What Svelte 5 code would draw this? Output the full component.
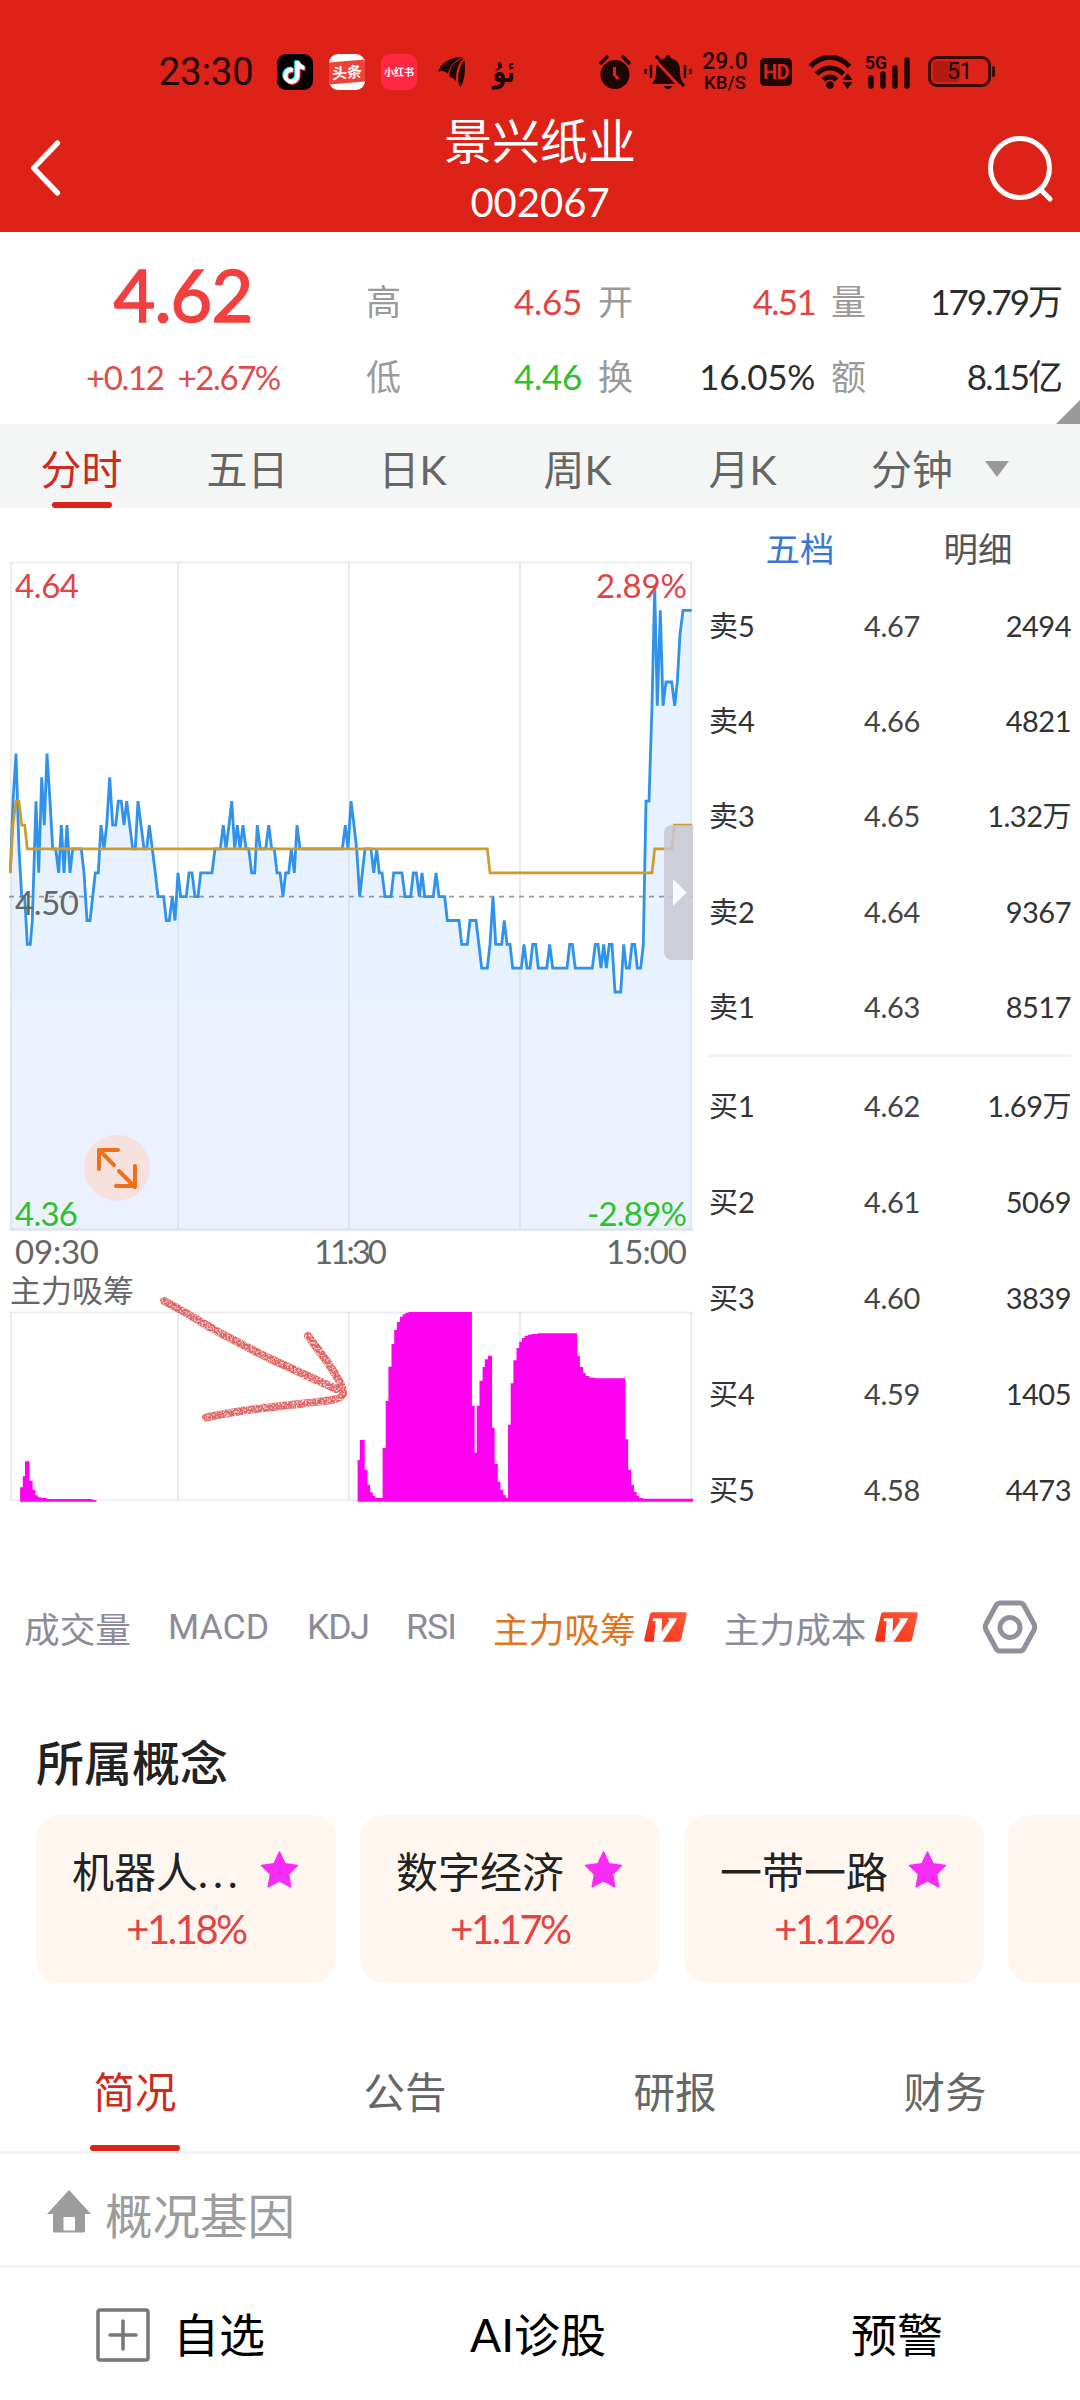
<script>
  const quotes = [
    { label: '高', value: '4.65', tone: 'up' },
    { label: '开', value: '4.51', tone: 'up' },
    { label: '量', value: '179.79万', tone: 'flat' },
    { label: '低', value: '4.46', tone: 'down' },
    { label: '换', value: '16.05%', tone: 'flat' },
    { label: '额', value: '8.15亿', tone: 'flat' }
  ];
  const periods = ['分时', '五日', '日K', '周K', '月K', '分钟'];
  const asks = [
    ['卖5', '4.67', '2494'],
    ['卖4', '4.66', '4821'],
    ['卖3', '4.65', '1.32万'],
    ['卖2', '4.64', '9367'],
    ['卖1', '4.63', '8517']
  ];
  const bids = [
    ['买1', '4.62', '1.69万'],
    ['买2', '4.61', '5069'],
    ['买3', '4.60', '3839'],
    ['买4', '4.59', '1405'],
    ['买5', '4.58', '4473']
  ];
  const indicators = [
    { name: '成交量' },
    { name: 'MACD' },
    { name: 'KDJ' },
    { name: 'RSI' },
    { name: '主力吸筹', vip: true, active: true },
    { name: '主力成本', vip: true }
  ];
  const concepts = [
    { name: '机器人', more: '...', change: '+1.18%' },
    { name: '数字经济', change: '+1.17%' },
    { name: '一带一路', change: '+1.12%' }
  ];
  const sections = ['简况', '公告', '研报', '财务'];

  // Price series: [thirds of a pixel from the origin, cents above the previous close]
  const morning = [
    [31,1],[39,4],[48,6],[57,2],[65,0],[74,0],[82,-2],[91,-2],[97,-1],[108,4],[116,1],[125,5],[133,3],[141,6],[150,4],[158,2],
    [167,2],[176,1],[184,3],[192,1],[201,3],[210,1],[218,2],[244,2],[252,1],[261,-1],[270,-1],[278,0],[286,1],[295,1],[303,3],
    [312,2],[320,3],[329,5],[338,3],[347,3],[355,4],[364,4],[372,3],[380,4],[389,3],[398,2],[406,2],[414,4],[423,3],[432,2],
    [440,2],[448,3],[457,2],[466,1],[474,0],[491,0],[499,-1],[508,-1],[517,0],[525,-1],[534,1],[542,0],[559,0],[567,1],[576,1],
    [585,0],[594,0],[602,1],[636,1],[645,2],[661,2],[670,3],[678,2],[687,3],[695,4],[704,2],[712,3],[720,2],[729,3],[738,2],
    [746,2],[755,1],[764,1],[772,3],[781,2],[797,2],[806,3],[815,2],[823,2],[831,1],[840,1],[849,0],[857,1],[866,1],[874,2],
    [883,1],[891,3],[900,2],[1027,2],[1036,3],[1044,2]
  ];
  const afternoon = [
    [33,4],[42,3],[50,2],[59,0],[67,1],[75,2],[93,2],[101,1],[110,2],[118,1],[126,1],[135,0],[153,0],[161,1],[186,1],[195,0],
    [212,0],[220,1],[229,1],[238,0],[246,1],[254,0],[280,0],[288,1],[297,0],[314,0],[322,-1],[357,-1],[365,-2],[382,-2],[390,-1],
    [408,-1],[425,-3],[442,-3],[450,-2],[459,0],[467,-2],[485,-2],[493,-1],[501,-2],[510,-2],[518,-3],[544,-3],[552,-2],[561,-3],
    [570,-3],[578,-2],[587,-2],[595,-3],[620,-3],[629,-2],[638,-3],[681,-3],[689,-2],[697,-2],[706,-3],[757,-3],[766,-2],[774,-2],
    [783,-3],[791,-2],[799,-3],[808,-2],[816,-2],[825,-4],[842,-4],[851,-2],[859,-3],[868,-3],[876,-2],[884,-2],[892,-3],[902,-3],
    [910,-2],[918,4],[927,4],[936,8],[944,13],[952,8],[961,12],[969,8],[978,9],[995,9],[1004,8],[1012,9],[1020,11],[1029,12],[1055,12]
  ];
  const average = [[31,1],[39,3],[48,4],[57,4],[65,3],[74,3],[82,2],[1462,2],[1470,1],[1956,1],[1964,2],[2016,2],[2023,3],[2076,3]];
  const py = (level) => (388.6 - level * 23.85).toFixed(1);
  const toPoints = (list) => list.map(([x, l]) => `${(x / 3).toFixed(1)},${py(l)}`).join(' ');
  const series = [...morning, ...afternoon.map(([x, l]) => [x + 1020, l])];
  const priceLine = toPoints(series);
  const avgLine = toPoints(average);

  // Accumulation histogram as a step outline
  const early = [[45,1072],[51,1039],[56,994],[66,1052],[73,1080],[79,1096],[85,1102],[92,1104],[105,1107],[207,1110],[216,1115]];
  const late = [
    [801,990],[806,930],[817,1020],[823,1064],[829,1087],[835,1098],[841,1104],[857,954],[864,813],[870,710],[877,642],[883,600],
    [889,576],[896,560],[902,553],[908,548],[915,546],[1057,827],[1063,968],[1068,827],[1074,752],[1081,711],[1086,688],[1093,677],
    [1102,893],[1108,1002],[1115,1055],[1121,1080],[1127,1095],[1133,1103],[1138,884],[1144,760],[1150,691],[1157,654],[1163,635],
    [1169,624],[1175,618],[1182,614],[1190,612],[1205,610],[1293,678],[1299,711],[1306,729],[1312,738],[1320,743],[1335,745],
    [1401,928],[1407,1019],[1414,1064],[1420,1086],[1426,1098],[1432,1104],[1440,1106],[1552,1115]
  ];
  const steps = (list) =>
    `M${(list[0][0] / 2.24).toFixed(1)} 993.7` +
    list.map(([x, y]) => `H${(x / 2.24).toFixed(1)}V${(622 + y / 3).toFixed(1)}`).join('') + 'Z';
</script>

<div class="screen">
  <header class="top">
    <div class="status">
      <span class="clock">23:30</span>
      <svg class="app" viewBox="0 0 36 36"><rect width="36" height="36" rx="9"/><g fill="none" stroke-width="4.2"><path d="M16 16a6 6 0 1 0 4.5 5.8V7.5c1 4 3.500 6 7 6.300" stroke="#25f4ee" transform="translate(-1.200 -1)"/><path d="M16 16a6 6 0 1 0 4.500 5.800V7.500c1 4 3.500 6 7 6.300" stroke="#fe2c55" transform="translate(1 1)"/><path d="M16 16a6 6 0 1 0 4.500 5.800V7.500c1 4 3.500 6 7 6.300" stroke="#fff"/></g></svg>
      <span class="chip news"><b>头条</b></span>
      <span class="chip book">小红书</span>
      <svg class="leaf" viewBox="0 0 27 30"><path d="M0 15C3 6 12 0 25 0C16 4 11 10 10 17C7 14 3 13 0 15ZM11.500 20C10.500 11 16.500 4 26 1C19 8 18 15 18 24C16 22 14 20 11.500 20ZM20.500 26C19.500 16 22 8 26.500 3C27.500 13 27 23 22.500 30C22 28 21 27 20.500 26Z"/></svg>
      <span class="uyghur">ئۇ</span>
      <svg class="alarm" viewBox="0 0 34 36"><circle cx="17" cy="20.500" r="14.500"/><path d="M3 9L9 3M31 9L25 3" stroke="#1f0503" stroke-width="3.500" stroke-linecap="round"/><path d="M16.500 13v8l4 4" fill="none" stroke="#dd2318" stroke-width="3"/></svg>
      <svg class="bell" viewBox="0 0 48 36"><path d="M24 1c-2 0-2.500 1-2.500 3C14 6 12 11 12 16c0 7-1 10-4 14h32c-3-4-4-7-4-14 0-5-2-10-9.500-12C26.500 2 26 1 24 1ZM20 32h8c-1 4-7 4-8 0Z"/><path d="M9 4L37 34" stroke="#dd2318" stroke-width="3"/><path d="M12 2L40 32" stroke="#1f0503" stroke-width="3"/><path d="M7 11v13M1.500 15v5M41 11v13M46.500 15v5" stroke="#1f0503" stroke-width="2.500"/></svg>
      <span class="speed"><b>29.0</b><b class="unit">KB/S</b></span>
      <span class="hd">HD</span>
      <svg class="wifi" viewBox="0 0 44 34"><g fill="none" stroke="#1f0503" stroke-width="5"><path d="M2 11.500C13-1 30-1 41 11.500"/><path d="M8 19c8-8 19-8 27 0"/><path d="M15 25c4-4 9-4 13 0"/></g><circle cx="21.500" cy="30" r="3.800"/><path d="M34 25l5-7 5 7ZM34 27l5 7 5-7Z"/></svg>
      <svg class="signal" viewBox="0 0 50 36"><text x="0" y="15" textLength="22" lengthAdjust="spacingAndGlyphs">5G</text><g stroke="#1f0503" stroke-width="5.500" stroke-linecap="round"><path d="M6 24v8M18 20v12M30 14v18M42 6v26"/></g></svg>
      <span class="battery"><i></i><em>51</em></span>
    </div>
    <div class="titlebar">
      <svg class="back" viewBox="0 0 32 56"><path d="M28 4L5 28l23 24" /></svg>
      <div class="title"><h1>景兴纸业</h1><span>002067</span></div>
      <svg class="search" viewBox="0 0 68 68"><circle cx="32" cy="33" r="29.500"/><path d="M52 54L62 64"/></svg>
    </div>
  </header>

  <section class="quote">
    <div class="last">
      <strong>4.62</strong>
      <span>+0.12&nbsp; +2.67%</span>
    </div>
    <dl>
      {#each quotes as q}
        <div><dt>{q.label}</dt><dd class={q.tone}>{q.value}</dd></div>
      {/each}
    </dl>
    <i class="corner"></i>
  </section>

  <nav class="periods">
    {#each periods as p, i}
      <span class:active={i === 0}>{p}</span>
    {/each}
    <i></i>
  </nav>

  <main>
    <svg class="chart" viewBox="0 0 700 1012" width="700" height="1012">
      <defs>
        <linearGradient id="area" x1="0" y1="54" x2="0" y2="722" gradientUnits="userSpaceOnUse">
          <stop offset="0.656" stop-color="#e7f2fe"/><stop offset="0.656" stop-color="#ebf2fe"/>
        </linearGradient>
        <filter id="chalk" x="-10%" y="-10%" width="120%" height="120%">
          <feTurbulence type="fractalNoise" baseFrequency="0.55" numOctaves="2" seed="4" result="n"/>
          <feColorMatrix in="n" type="matrix" values="0 0 0 0 0  0 0 0 0 0  0 0 0 0 0  2.600 0 0 0 -0.450" result="a"/>
          <feComposite in="SourceGraphic" in2="a" operator="in"/>
        </filter>
      </defs>
      <polygon points={`10.300,721 ${priceLine} 691.500,721`} fill="url(#area)"/>
      <g class="grid">
        <path d="M11 54.500V721M178 54.500V721M349 54.500V721M520 54.500V721M691 54.500V721"/>
        <path d="M9 54.500H693" stroke-width="1.300"/><path d="M9 721.500H693" class="base"/>
      </g>
      <path d="M9 388.600H693" class="dash"/>
      <polyline points={priceLine} class="price"/>
      <polyline points={avgLine} class="avg"/>
      <g class="labels">
        <text x="15" y="89.500" class="up" textLength="64">4.64</text>
        <text x="596" y="89.500" class="up" textLength="91">2.89%</text>
        <text x="15" y="407" textLength="64">4.50</text>
        <text x="15" y="717.500" class="down" textLength="63">4.36</text>
        <text x="587" y="717.500" class="down" textLength="100">-2.89%</text>
        <text x="15" y="756" textLength="84">09:30</text>
        <text x="314" y="756" textLength="73">11:30</text>
        <text x="606" y="756" textLength="81">15:00</text>
        <text x="10" y="793.500" class="cn" textLength="124">主力吸筹</text>
      </g>
      <path class="handle" d="M693 317H672a8 8 0 0 0-8 8V444a8 8 0 0 0 8 8H693Z"/>
      <path d="M673 371L686.500 384.500L673 398Z" fill="#f9fbff"/>
      <circle cx="117" cy="659.700" r="33" fill="#f7e1de"/>
      <path class="expand" d="M99 661V642H118M99 642L114 657M119 663L135 679M135 658V678H116"/>
      <g class="grid">
        <path d="M11 804.500V992M178 804.500V992M349 804.500V992M520 804.500V992M691 804.500V992"/>
        <path d="M9 804.500H693M9 992H693" stroke-width="1.300"/>
      </g>
      <path d={steps(early) + steps(late)} fill="#ff00f0"/>
      <g class="mark" filter="url(#chalk)">
        <path d="M164 793L179 801C196 810 214 823 232 831C250 841 268 850 286 858C303 866 319 873 336 881"/>
        <path d="M308 828L328 855C338 870 343 878 343 886C342 893 320 893 300 896C270 899 235 903 206 909.500"/>
      </g>
    </svg>

    <aside>
      <div class="booktabs"><span class="on">五档</span><span>明细</span></div>
      <div class="rows asks">
        {#each asks as [n, p, v]}
          <div class="row"><span>{n}</span><span class="p">{p}</span><span class="v">{v}</span></div>
        {/each}
      </div>
      <div class="rows bids">
        {#each bids as [n, p, v]}
          <div class="row"><span>{n}</span><span class="p">{p}</span><span class="v">{v}</span></div>
        {/each}
      </div>
    </aside>
  </main>

  <nav class="indicators">
    {#each indicators as ind}
      <span class:active={ind.active}>{ind.name}{#if ind.vip}<svg viewBox="0 0 44 30"><defs><linearGradient id="vip" x1="0" y1="1" x2="1" y2="0"><stop offset="0" stop-color="#f52d12"/><stop offset="1" stop-color="#ff5a3c"/></linearGradient></defs><path d="M8.500 0H42q2 0 1.700 2L38 27.500q-.6 2.500-3 2.500H2q-2.300 0-1.700-2.500L6 2.500Q6.500 0 8.500 0Z" fill="url(#vip)"/><path d="M9 6H18.500L18 20L26 8L24 6H34L32 10L19 30H10L12 9H9Z" fill="#fff"/></svg>{/if}</span>
    {/each}
    <svg class="hex" viewBox="0 0 56 54"><path d="M18 3H38q2.500 0 4 2.500L52 24q1.500 3 0 6L42 48.500q-1.500 2.500-4 2.500H18q-2.500 0-4-2.500L4 30q-1.500-3 0-6L14 5.500q1.500-2.500 4-2.500Z"/><circle cx="28" cy="27.500" r="10"/></svg>
  </nav>

  <h2>所属概念</h2>
  <section class="cards">
    {#each concepts as c}
      <article>
        <div class="name"><span>{c.name}{#if c.more}<i>{c.more}</i>{/if}</span><svg viewBox="0 0 38 36"><path d="M19 1l5.300 11.300L36.500 14l-8.800 8.600L30 35l-11-6-11 6 2.300-12.400L1.500 14l12.200-1.700Z" stroke="#f92cf5" stroke-width="1.500" stroke-linejoin="round"/></svg></div>
        <div class="change">{c.change}</div>
      </article>
    {/each}
    <article></article>
  </section>

  <nav class="sections">
    {#each sections as s, i}
      <span class:active={i === 0}>{s}</span>
    {/each}
  </nav>

  <section class="overview">
    <svg viewBox="0 0 44 43"><path d="M22 0L44 24H38V41q0 1.500-1.500 1.500H7.500Q6 42.500 6 41V24H0ZM16.500 27V40.500H28V27Z" fill-rule="evenodd"/></svg>
    <span>概况基因</span>
  </section>

  <footer>
    <span class="add"><svg viewBox="0 0 54 54"><rect x="2" y="2" width="50" height="50" rx="2"/><path d="M14 27H40M27 13V41"/></svg>自选</span>
    <span class="ai">AI诊股</span>
    <span class="alert">预警</span>
  </footer>
</div>

<style>
  :global(body) { background: #fefefe; }
  .screen { width: 1080px; height: 2400px; overflow: hidden; background: #fefefe; color: #333; font-family: Lato, 'Noto Sans CJK SC', sans-serif; line-height: 1; display: flex; flex-direction: column; }
  .screen > * { flex-shrink: 0; box-sizing: border-box; white-space: nowrap; }
  svg { display: block; flex-shrink: 0; }
  i, em { font-style: normal; }

  .top { height: 232px; background: #dd2318; color: #fff; padding-top: 44px; }
  .status { height: 55px; padding-left: 159px; display: flex; align-items: center; color: #1f0503; fill: #1f0503; }
  .status > * { flex-shrink: 0; }
  .clock { font: 38px Roboto, sans-serif; width: 118px; }
  .app { width: 36px; height: 36px; fill: #000; margin-right: 16px; }
  .chip { width: 36px; height: 36px; border-radius: 9px; display: flex; align-items: center; justify-content: center; font-size: 15px; margin-right: 16px; overflow: hidden; }
  .news { background: #fff; }
  .news b { background: #ee4238; color: #fff; width: 36px; text-align: center; line-height: 22px; transform: skewY(-5deg); }
  .book { background: #ff2741; color: #fff; font-size: 10px; font-weight: bold; }
  .leaf { width: 27px; height: 30px; margin-left: 5px; }
  .uyghur { font: bold 28px/36px 'DejaVu Sans', sans-serif; width: 32px; margin-left: 23px; margin-right: 78px; text-align: center; transform: scale(.8, 1.1); }
  .alarm { width: 34px; height: 36px; }
  .bell { width: 48px; height: 36px; margin-left: 12px; }
  .speed { width: 48px; margin-left: 9px; display: flex; flex-direction: column; align-items: center; gap: 1px; font: 23px/22px Roboto, sans-serif; }
  .speed b { font-weight: 500; }
  .speed .unit { font-size: 18.500px; line-height: 19px; font-weight: 500; }
  .hd { margin-left: 11px; width: 32px; height: 28px; border-radius: 5px; background: #1f0503; color: #dd2318; font: bold 20px/29px Roboto, sans-serif; text-align: center; letter-spacing: -.5px; }
  .wifi { width: 45px; height: 34px; margin-left: 16px; }
  .signal { width: 50px; height: 36px; margin-left: 12px; overflow: visible; }
  .signal text { font: bold 18px Roboto, sans-serif; }
  .battery { position: relative; width: 63px; height: 31px; box-sizing: border-box; border: 3px solid #3a0a06; border-radius: 9px; margin-left: 13px; display: flex; align-items: center; justify-content: center; }
  .battery::after { content: ''; position: absolute; right: -7px; top: 7px; width: 3px; height: 11px; border-radius: 2px; background: #3a0a06; }
  .battery i { position: absolute; left: 2px; top: 2px; width: 27px; height: 21px; background: #b31b12; border-radius: 4px; }
  .battery em { position: relative; font: 23px/25px Roboto, sans-serif; letter-spacing: -.5px; }

  .titlebar { display: flex; justify-content: space-between; align-items: flex-start; padding: 12px 24px 0 27px; height: 133px; box-sizing: border-box; }
  .back { width: 36px; height: 58px; margin-top: 28px; fill: none; stroke: #fff; stroke-width: 5.200; stroke-linecap: round; stroke-linejoin: round; }
  .search { width: 68px; height: 68px; margin-top: 24px; fill: none; stroke: #fff; stroke-width: 5; stroke-linecap: round; }
  .title { display: flex; flex-direction: column; align-items: center; margin-left: 29px; }
  h1 { margin: 0; font-size: 48px; line-height: 60px; font-weight: 400; }
  .title span { font-size: 40px; line-height: 62px; }

  .quote { position: relative; height: 192px; display: flex; background: #fff; }
  .last { width: 366px; display: flex; flex-direction: column; align-items: center; color: #f24040; }
  .last strong { font-size: 72px; font-weight: 400; line-height: 72px; margin-top: 26px; letter-spacing: -.8px; -webkit-text-stroke: 1.600px #f24040; }
  .last span { color: #e04b4b; font-size: 33px; line-height: 40px; margin-top: 27px; letter-spacing: -1.400px; }
  dl { margin: 34px 0 0; display: grid; grid-template-columns: 216px 217px 231px; grid-template-rows: 75px 75px; column-gap: 16px; align-content: start; }
  dl div { display: flex; justify-content: space-between; line-height: 70px; }
  dt { font-size: 35px; color: #9a9a9a; }
  dd { margin: 0; font-size: 35px; letter-spacing: -.3px; }
  dl div:nth-child(2) dd { letter-spacing: -1.700px; }
  dl div:nth-child(3n) dd { letter-spacing: -2px; margin-right: 1px; }
  .up { color: #e04444; fill: #e04444; }
  .down { color: #2fc02f; fill: #2fc02f; }
  .flat { color: #2c2c2c; }
  .corner { position: absolute; right: 0; bottom: 0; border-left: 24px solid transparent; border-bottom: 24px solid #999; }

  .periods { height: 84px; background: #f4f6f6; display: flex; align-items: center; color: #666; font-size: 41px; }
  .periods span { position: relative; width: 165px; height: 84px; line-height: 92px; text-align: center; }
  .periods span:first-child { margin-left: -1px; margin-right: 1px; }
  .periods span:nth-child(6) { width: 160px; padding-left: 7px; }
  .periods .active { color: #cf2a20; }
  .periods .active::after, .sections .active::after { content: ''; position: absolute; bottom: 0; left: 53px; width: 60px; height: 6px; border-radius: 3px; background: #dd2318; }
  .periods i { border: 12px solid transparent; border-top: 16px solid #999; border-bottom: 0; margin-top: 6px; margin-left: -7px; }

  main { display: flex; height: 1012px; }
  .grid { fill: none; stroke: #d0d5da; stroke-opacity: .45; stroke-width: 2; }
  .base { stroke: #d8e0ea; stroke-opacity: 1; }
  .dash { stroke: #999; stroke-width: 1.800; stroke-dasharray: 5 5; }
  .price { fill: none; stroke: #3192ea; stroke-width: 2.800; stroke-linejoin: miter; stroke-miterlimit: 2; }
  .avg { fill: none; stroke: #cc9c2c; stroke-width: 2.700; }
  .labels { font-size: 33px; fill: #666; }
  .labels .cn { font-size: 31px; }
  .handle { fill: #c8c8d1; fill-opacity: .85; }
  .expand { fill: none; stroke: #f0701a; stroke-width: 4; stroke-linecap: round; stroke-linejoin: round; }
  .mark path { fill: none; stroke: #e06464; stroke-width: 8; stroke-linecap: round; stroke-linejoin: round; }

  aside { width: 380px; box-sizing: border-box; padding: 0 9px 0 8px; font-size: 29px; }
  .booktabs { display: flex; height: 70px; line-height: 81px; font-size: 34.500px; color: #555; padding-left: 3px; }
  .booktabs span { width: 178px; text-align: center; }
  .booktabs .on { color: #3a78d0; }
  .row { display: grid; grid-template-columns: 106px 105px 1fr; align-items: center; height: 95.200px; padding-left: 1px; }
  .p, .v { text-align: right; }
  .p { color: #444; letter-spacing: -.3px; }
  .v { letter-spacing: -.5px; }
  .asks { height: 476px; border-bottom: 3px solid #f3f3f3; }
  .bids .row { height: 95.800px; }
  .bids { padding-top: 1px; }

  .indicators { display: flex; align-items: center; height: 80px; margin-top: 67px; padding-left: 24px; gap: 37px; font: 35.700px Roboto, 'Noto Sans CJK SC', sans-serif; color: #8b8b99; }
  .indicators span { display: flex; align-items: center; }
  .indicators span:nth-child(2) { width: 102px; }
  .indicators span:nth-child(3) { width: 62px; letter-spacing: -1.300px; }
  .indicators span:nth-child(4) { width: 50px; letter-spacing: -1px; }
  .indicators span svg { width: 43px; height: 30px; margin-left: 8px; }
  .indicators .active { color: #e07520; }
  .indicators .hex { width: 56px; height: 54px; margin-left: 27px; fill: none; stroke: #8f8f9e; stroke-width: 5; }

  h2 { margin: 62px 0 0; padding-left: 36px; height: 86px; line-height: 68px; font-size: 48px; font-weight: 500; color: #222; }
  .cards { display: flex; gap: 24px; padding-left: 36px; height: 168px; }
  article { width: 300px; height: 168px; flex-shrink: 0; border-radius: 24px; background: #fff6f0; box-sizing: border-box; padding-top: 36px; }
  .name { display: flex; justify-content: space-between; align-items: center; padding: 0 37px 0 36px; height: 42px; font-size: 42px; color: #222; }
  .name span { line-height: 42px; }
  .name i { letter-spacing: 5px; }
  .name svg { width: 39px; height: 37px; margin-top: -5px; fill: #f92cf5; }
  .change { margin-top: 14px; text-align: center; font-size: 40px; line-height: 44px; letter-spacing: -2.500px; color: #e04444; }

  .sections { display: flex; height: 171px; border-bottom: 3px solid #f3f4f4; font-size: 41.500px; color: #666; }
  .sections span { position: relative; width: 270px; text-align: center; padding-top: 89px; height: 168px; box-sizing: border-box; }
  .sections .active { color: #cf2a20; }
  .sections .active::after { left: 90px; width: 90px; }

  .overview { height: 114px; border-bottom: 3px solid #f2f4f4; display: flex; align-items: center; padding: 12px 0 0 47px; gap: 14px; font-size: 47.500px; color: #9c9c9c; }
  .overview svg { width: 44px; height: 43px; fill: #9c9c9c; margin-top: -8px; }

  footer { height: 132px; display: flex; align-items: center; font-size: 46px; color: #000; }
  footer span { display: flex; align-items: center; height: 132px; padding-top: 2px; box-sizing: border-box; }
  .add { width: 360px; padding-left: 96px; gap: 23px; }
  .add svg { width: 54px; height: 54px; fill: none; stroke: #777; stroke-width: 3.500; stroke-linecap: round; }
  .ai { width: 356px; justify-content: center; }
  .alert { width: 362px; justify-content: center; }
</style>
